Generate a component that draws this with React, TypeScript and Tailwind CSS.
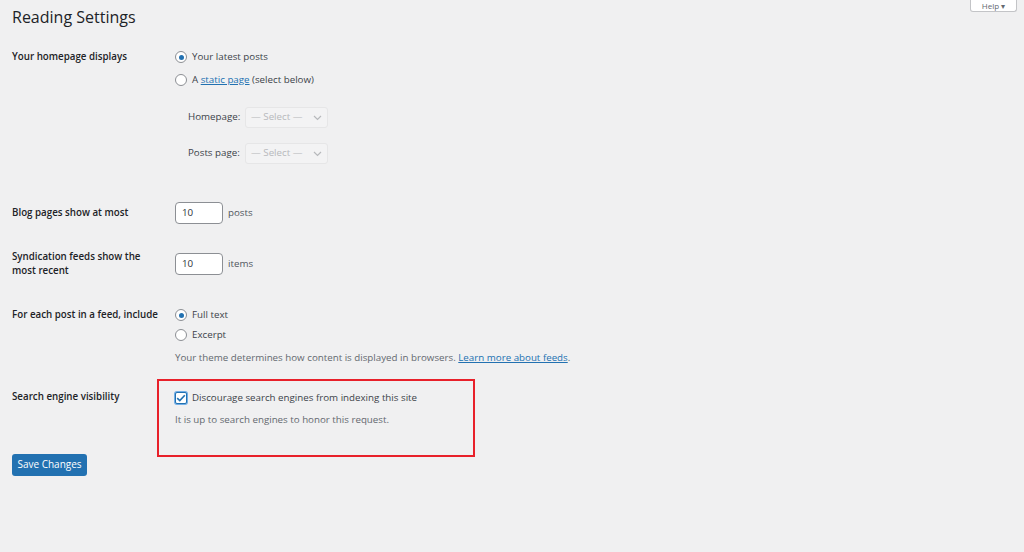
import React from 'react';

const font = { fontFamily: '"Open Sans", "Noto Sans", Arial, sans-serif' };

function Radio({ checked, children }: { checked?: boolean; children: React.ReactNode }) {
  return (
    <label className="flex items-center h-[20px]">
      <span className="w-[12px] h-[12px] rounded-full border border-[#8c8f94] bg-white flex items-center justify-center mr-[5px]">
        {checked && <span className="w-[5px] h-[5px] rounded-full bg-[#2271b1]" />}
      </span>
      <span className="text-[#3c434a]">{children}</span>
    </label>
  );
}

function Select() {
  return (
    <div className="w-[83px] h-[21px] border border-[#e6e6e7] rounded-[3px] bg-[#f3f3f4] flex items-center justify-between px-[5px] text-[#b7b9bc]">
      <span>— Select —</span>
      <svg width="9" height="6" viewBox="0 0 9 6" fill="none">
        <path d="M1 1l3.5 3.5L8 1" stroke="#b7b9bc" strokeWidth="1.2" />
      </svg>
    </div>
  );
}

function NumberBox({ value, unit }: { value: string; unit: string }) {
  return (
    <div className="flex items-center">
      <div className="w-[48px] h-[22px] bg-white border border-[#8c8f94] rounded-[4px] flex items-center px-[6px] text-[#2c3338]">
        {value}
      </div>
      <span className="ml-[5px] text-[#50575e]">{unit}</span>
    </div>
  );
}

export default function App() {
  return (
    <div className="w-[1024px] h-[552px] bg-[#f0f0f1] relative overflow-hidden text-[9.75px] text-[#1d2327]" style={font}>
      <div className="absolute right-[7px] top-0 w-[47px] h-[12px] bg-white border border-t-0 border-[#c3c4c7] rounded-b-[3px] flex items-end justify-center text-[#646970] text-[8px] leading-[9px]">
        <span className="mb-[1px]">Help ▾</span>
      </div>

      <div className="pl-[12px]">
        <h1 className="text-[16px] leading-[20px] pt-[7px] text-[#1d2327]">Reading Settings</h1>

        <div className="flex mt-[20px]">
          <div className="w-[163px] font-semibold pt-[3px]">Your homepage displays</div>
          <div className="flex flex-col gap-[3px]">
            <Radio checked>Your latest posts</Radio>
            <Radio>
              A <span className="text-[#2271b1] underline">static page</span> (select below)
            </Radio>
            <div className="ml-[13px] mt-[14px] flex flex-col gap-[15px] text-[#3c434a]">
              <div className="flex items-center gap-[3px]">
                <span className="w-[54px]">Homepage:</span>
                <Select />
              </div>
              <div className="flex items-center gap-[3px]">
                <span className="w-[54px]">Posts page:</span>
                <Select />
              </div>
            </div>
          </div>
        </div>

        <div className="flex items-center mt-[38px]">
          <div className="w-[163px] font-semibold">Blog pages show at most</div>
          <NumberBox value="10" unit="posts" />
        </div>

        <div className="flex items-center mt-[26px]">
          <div className="w-[163px] font-semibold leading-[14px]">
            Syndication feeds show the
            <br />
            most recent
          </div>
          <NumberBox value="10" unit="items" />
        </div>

        <div className="flex mt-[27px]">
          <div className="w-[163px] font-semibold pt-[3px]">For each post in a feed, include</div>
          <div className="flex flex-col">
            <Radio checked>Full text</Radio>
            <Radio>Excerpt</Radio>
            <p className="text-[#646970] mt-[6px]">
              Your theme determines how content is displayed in browsers.{' '}
              <span className="text-[#2271b1] underline">Learn more about feeds</span>.
            </p>
          </div>
        </div>

        <div className="flex mt-[13px]">
          <div className="w-[145px] font-semibold pt-[11px]">Search engine visibility</div>
          <div className="w-[318px] h-[78px] border-2 border-[#e8202a] pl-[16px] pt-[10px]">
            <label className="flex items-center">
              <span className="w-[12px] h-[12px] border border-[#2271b1] rounded-[2px] bg-white flex items-center justify-center mr-[5px] shadow-[0_0_0_1px_#72aee6]">
                <svg width="10" height="8" viewBox="0 0 10 8" fill="none">
                  <path d="M1.2 4.2L3.8 6.6L8.8 1.2" stroke="#2271b1" strokeWidth="1.6" />
                </svg>
              </span>
              <span className="text-[#3c434a]">Discourage search engines from indexing this site</span>
            </label>
            <p className="text-[#646970] mt-[8px]">It is up to search engines to honor this request.</p>
          </div>
        </div>

        <button className="mt-[-3px] w-[75px] h-[22px] bg-[#2271b1] text-white rounded-[3px] text-[10px]">
          Save Changes
        </button>
      </div>
    </div>
  );
}
